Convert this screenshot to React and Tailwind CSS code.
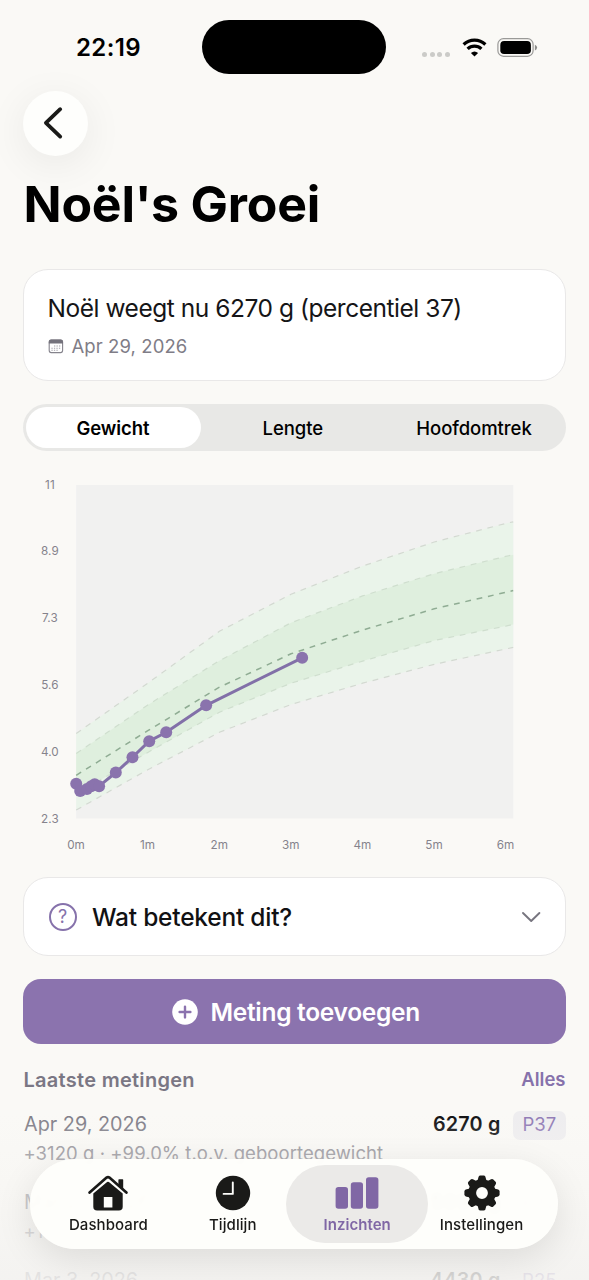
import React from 'react';

const GREEN_LINE = '#8fac93';
const PURPLE = '#8a73ad';

/* Growth standard, kg per month (0..6) plus the value at the right edge of the plot. */
const MONTHS = [0, 1, 2, 3, 4, 5, 6, 6.104];
const P3 = [2.5, 3.5, 4.43, 5.12, 5.65, 6.12, 6.5, 6.54];
const P15 = [2.9, 3.93, 4.93, 5.65, 6.2, 6.71, 7.07, 7.11];
const P50 = [3.36, 4.47, 5.55, 6.38, 6.97, 7.5, 7.91, 7.95];
const P85 = [3.9, 5.11, 6.21, 7.15, 7.82, 8.37, 8.8, 8.84];
const P97 = [4.4, 5.65, 6.94, 7.86, 8.56, 9.16, 9.62, 9.66];

const POINTS = [
  [0, 3.15], [0.056, 2.97], [0.15, 3.02], [0.21, 3.09], [0.258, 3.14], [0.32, 3.09],
  [0.553, 3.43], [0.786, 3.81], [1.02, 4.21], [1.257, 4.43], [1.815, 5.1], [3.156, 6.28],
];

const px = (m) => 53.2 + m * 71.6;
const py = (kg) => 348 - (kg - 2.3) * 40.24;
const line = (vals) => vals.map((v, i) => `${px(MONTHS[i]).toFixed(1)},${py(v).toFixed(1)}`);
const band = (a, b) => [...line(a), ...line(b).reverse()].join(' ');

const Y_LABELS = ['11', '8.9', '7.3', '5.6', '4.0', '2.3'];
const X_LABELS = ['0m', '1m', '2m', '3m', '4m', '5m', '6m'];

function GrowthChart() {
  return (
    <svg className="mt-[19px] block h-[387px] w-[542px] shrink-0" viewBox="0 0 542 387" fontFamily="Inter, sans-serif" fontSize="11.7" fill="#85838c">
      <rect x="53.2" y="15" width="437.1" height="333.5" fill="#f1f1f0" />
      <polygon points={band(P97, P3)} fill="#eaf4ea" />
      <polygon points={band(P85, P15)} fill="#dfefde" />
      {[P97, P85, P15, P3].map((p, i) => (
        <polyline key={i} points={line(p).join(' ')} fill="none" stroke={i === 1 || i === 2 ? '#cfdece' : '#d3d9d1'} strokeWidth="1.2" strokeDasharray="5.8 5.8" />
      ))}
      <polyline points={line(P50).join(' ')} fill="none" stroke={GREEN_LINE} strokeWidth="1.5" strokeDasharray="5.8 5.8" />
      <polyline points={POINTS.map(([m, v]) => `${px(m)},${py(v)}`).join(' ')} fill="none" stroke="#8270a8" strokeWidth="3" strokeLinejoin="round" />
      {POINTS.map(([m, v]) => (
        <circle key={m} cx={px(m)} cy={py(v)} r="6" fill={PURPLE} />
      ))}
      {Y_LABELS.map((t, i) => (
        <text key={t} x="26.9" y={18.6 + i * 66.8} textAnchor="middle" letterSpacing="0.1">{t}</text>
      ))}
      {X_LABELS.map((t, i) => (
        <text key={t} x={53 + i * 71.6} y="379.3" textAnchor="middle">{t}</text>
      ))}
    </svg>
  );
}

function StatusBar() {
  return (
    <div className="flex h-[74px] shrink-0 items-center pt-5">
      <div className="w-[202.4px] pt-[2px] pl-[76px] text-[24px] leading-none font-[580] tracking-[0.4px]">22:19</div>
      <div className="h-[54px] w-[184px] rounded-full bg-black" />
      <div className="ml-[35.5px] flex gap-[2.8px] pt-[14px]">
        {[0, 1, 2, 3].map((i) => (
          <span key={i} className="size-[5px] rounded-full bg-[#cbcbc8]" />
        ))}
      </div>
      <svg className="ml-[11.5px] h-[19px] w-[25px]" viewBox="0 0 25 19" fill="none" stroke="#000" strokeWidth="3.2">
        <path d="M1.6 6.5 A15.8 15.8 0 0 1 23.4 6.5" />
        <path d="M5.6 10.9 A9.8 9.8 0 0 1 19.4 10.9" />
        <path d="M12.5 18.6 L8.9 15 A5.4 5.4 0 0 1 16.1 15 Z" fill="#000" stroke="none" />
      </svg>
      <svg className="ml-[10.3px] h-[19px] w-[41px]" viewBox="0 0 41 19">
        <rect x="0.9" y="0.7" width="35.2" height="17.6" rx="5.6" fill="none" stroke="#9a9a98" strokeWidth="1.2" />
        <rect x="3.3" y="3.1" width="30.6" height="12.9" rx="3.8" fill="#000" />
        <path d="M37.9 6.8 q2.2 0.9 2.2 2.8 t-2.2 2.8 z" fill="#8c8c8a" />
      </svg>
    </div>
  );
}

function Card({ className, children }) {
  return <div className={`shrink-0 rounded-[25px] border-[1.5px] border-[#e9e8e8] bg-white ${className}`}>{children}</div>;
}

function CalendarIcon() {
  return (
    <svg className="h-[15px] w-[16px]" viewBox="0 0 16 15" fill="none">
      <rect x="1.2" y="1" width="13.4" height="12.6" rx="2" stroke="#85838c" strokeWidth="1.1" />
      <path d="M0.8 3 a2.4 2.4 0 0 1 2.4 -2.4 h9.4 a2.4 2.4 0 0 1 2.4 2.4 v1.4 h-14.2 z" fill="#74727c" />
      <path d="M6 7h6.8M3.4 9.2h9.4M3.4 11.3h6.8" stroke="#a3a1a9" strokeWidth="1.1" strokeDasharray="1.3 1.2" />
    </svg>
  );
}

const ROWS = [
  { date: 'Apr 29, 2026', value: '6270 g', p: 'P37', note: '+3120 g · +99.0% t.o.v. geboortegewicht', chip: 'bg-[#eeedef]' },
  { date: 'Mar 20, 2026', value: '5090 g', p: 'P32', note: '+1940 g · +61.6% t.o.v. geboortegewicht', chip: 'bg-transparent' },
  { date: 'Mar 3, 2026', value: '4430 g', p: 'P25', note: '+1280 g · +40.6% t.o.v. geboortegewicht', chip: 'bg-transparent' },
];

function MeasurementRow({ date, value, p, note, chip }) {
  return (
    <div className="h-[78px] shrink-0">
      <div className="flex h-[30px] items-center">
        <span className="flex-1 pl-px text-[19.8px] tracking-[0.02px] text-[#817f89]">{date}</span>
        <span className="text-[19.8px] font-semibold tracking-[0.18px] text-[#121214]">{value}</span>
        <span className={`ml-[12.5px] flex h-[29px] w-[52.5px] items-center justify-center rounded-[7px] text-[18.5px] text-[#917bb6] ${chip}`}>{p}</span>
      </div>
      <div className="pl-[0.5px] text-[18.5px] leading-[27px] tracking-[0.06px] text-[#8e8c94]">{note}</div>
    </div>
  );
}

function HouseIcon() {
  return (
    <svg className="h-[36px] w-[42px]" viewBox="0 0 42 36" fill="#1a1a18">
      <path d="M2.6 17.6 L19.6 2.6 Q21 1.5 22.4 2.6 L39.4 17.6" fill="none" stroke="#1a1a18" strokeWidth="2.7" strokeLinecap="round" strokeLinejoin="round" />
      <path d="M32 4.3 h3.6 q0.6 0 0.6 0.7 v9.4 l-4.8 -4.2 v-5.2 q0 -0.7 0.6 -0.7z" />
      <path fillRule="evenodd" d="M6.3 18.6 L20.1 7 Q21 6.3 21.9 7 L35.7 18.6 V31.8 Q35.7 35.6 31.9 35.6 H10.1 Q6.3 35.6 6.3 31.8 Z M16.8 22 V32.6 H25.4 V22 Z" />
    </svg>
  );
}

function ClockIcon() {
  return (
    <svg className="size-[36px]" viewBox="0 0 36 36">
      <circle cx="18" cy="18" r="17.2" fill="#1a1a18" />
      <path d="M17.8 7.4 V18.9 H8.6" fill="none" stroke="#fdfdfa" strokeWidth="1.9" strokeLinecap="round" strokeLinejoin="round" />
    </svg>
  );
}

function BarsIcon() {
  return (
    <svg className="h-[36px] w-[44px]" viewBox="0 0 44 36" fill="#8067a5">
      <rect x="0.6" y="12" width="12.4" height="21.8" rx="2.8" />
      <rect x="15.8" y="7.3" width="12.2" height="26.5" rx="2.8" />
      <rect x="31" y="2.3" width="12.4" height="31.5" rx="2.8" />
    </svg>
  );
}

function GearIcon() {
  return (
    <svg className="size-[36px]" viewBox="-18 -18 36 36" fill="#1a1a18">
      <circle r="9.8" fill="none" stroke="#1a1a18" strokeWidth="7.8" />
      {[0, 45, 90, 135, 180, 225, 270, 315].map((a) => (
        <path key={a} transform={`rotate(${a})`} d="M-4.6 -12 L-3.4 -16.2 Q-2.9 -17.6 -1.6 -17.6 H1.6 Q2.9 -17.6 3.4 -16.2 L4.6 -12 Z" />
      ))}
    </svg>
  );
}

const TABS = [
  { label: 'Dashboard', icon: <HouseIcon /> },
  { label: 'Tijdlijn', icon: <ClockIcon /> },
  { label: 'Inzichten', icon: <BarsIcon />, active: true },
  { label: 'Instellingen', icon: <GearIcon /> },
];

function TabBar() {
  return (
    <nav className="absolute bottom-[31px] left-[30px] flex h-[90px] w-[528px] rounded-full bg-[#fefefb]/97 pt-[5.5px] pr-[14px] pb-[6px] pl-[16.2px] shadow-[0_10px_36px_rgba(0,0,0,0.10)] backdrop-blur-[2px]">
      {TABS.map((t) => (
        <div
          key={t.label}
          className={
            t.active
              ? '-mx-[9px] flex w-[142.4px] shrink-0 flex-col items-center rounded-full bg-[#ebeae8] pt-[10.5px] text-[15px] font-semibold tracking-[0.04px] text-[#8067a5]'
              : 'flex w-[124.4px] shrink-0 flex-col items-center pt-[10.5px] text-[15px] font-medium tracking-[0.08px] text-[#1a1a18]'
          }
        >
          {t.icon}
          <span className="mt-[4px] leading-[20px]">{t.label}</span>
        </div>
      ))}
    </nav>
  );
}

export default function App() {
  return (
    <div className="relative flex h-[1280px] w-[589px] flex-col overflow-hidden bg-[#faf9f6] font-['Inter',sans-serif] text-black">
      <StatusBar />
      <div className="flex flex-col pr-[23.5px] pl-[23px]">
        <button className="mt-[16.5px] flex size-[65px] shrink-0 items-center justify-center rounded-full bg-[#fefefc] shadow-[0_8px_40px_rgba(0,0,0,0.07)]">
          <svg className="mr-[6px] h-[34px] w-[22px]" viewBox="0 0 22 34" fill="none" stroke="#1a1a18" strokeWidth="3.8" strokeLinecap="round" strokeLinejoin="round">
            <path d="M18.2 3.2 L3.9 16.9 L18.2 30.6" />
          </svg>
        </button>
        <h1 className="mt-[18.5px] h-[60px] shrink-0 pl-[0.5px] text-[50px] leading-[60px] font-bold tracking-[-0.22px]">Noël's Groei</h1>

        <Card className="mt-[35px] h-[111.5px] pt-[23px] pl-[23.5px]">
          <div className="text-[24.5px] leading-[30px] tracking-[-0.46px] text-[#151517]">Noël weegt nu 6270 g (percentiel 37)</div>
          <div className="mt-[10px] flex items-center text-[18.5px] leading-[26px] tracking-[0.09px] text-[#7f7d87]">
            <CalendarIcon />
            <span className="ml-[8px]">Apr 29, 2026</span>
          </div>
        </Card>

        <div className="mt-[23.5px] flex h-[46.5px] shrink-0 rounded-full bg-[#e8e8e6] p-[2.5px] text-center text-[18.5px] leading-[42px] font-[480]">
          <div className="w-[175.5px] rounded-full bg-white font-[580] tracking-[-0.05px]">Gewicht</div>
          <div className="w-[185px] tracking-[-0.06px]">Lengte</div>
          <div className="w-[178.5px] tracking-[-0.06px]">Hoofdomtrek</div>
        </div>

        <GrowthChart />

        <Card className="mt-[20.5px] flex h-[79px] items-center pt-px pr-[24px] pl-[24.5px]">
          <span className="flex size-[28px] items-center justify-center rounded-full border-[2px] border-[#8672ab] text-[18px] leading-none text-[#8672ab]">?</span>
          <span className="ml-[15.5px] flex-1 text-[24.5px] leading-[30px] font-[480] tracking-[-0.22px] text-[#111113]">Wat betekent dit?</span>
          <svg className="h-[12px] w-[20px]" viewBox="0 0 20 12" fill="none" stroke="#77757f" strokeWidth="1.9" strokeLinecap="round" strokeLinejoin="round">
            <path d="M2 2 L10.2 10 L18.4 2" />
          </svg>
        </Card>

        <button className="mt-[23px] flex h-[65px] shrink-0 items-center justify-center rounded-[18px] bg-[#8b73ae] pt-px pl-[3px] text-white">
          <svg className="size-[26px]" viewBox="0 0 26 26">
            <circle cx="13" cy="13" r="12.8" fill="#fff" />
            <path d="M13 7.6 V18.4 M7.6 13 H18.4" stroke="#8b73ae" strokeWidth="2.4" strokeLinecap="round" />
          </svg>
          <span className="ml-[13px] text-[24.5px] leading-[30px] font-[580] tracking-[-0.29px]">Meting toevoegen</span>
        </button>

        <div className="mt-[21px] flex h-[30px] shrink-0 items-center justify-between pl-[0.5px]">
          <h2 className="text-[20px] font-[580] tracking-[0.28px] text-[#7a7784]">Laatste metingen</h2>
          <span className="text-[18.5px] font-[580] text-[#8672ab]">Alles</span>
        </div>
        <div className="mt-[15px] flex h-[170px] shrink-0 flex-col">
          {ROWS.map((r) => (
            <MeasurementRow key={r.date} {...r} />
          ))}
        </div>
      </div>
      <div className="pointer-events-none absolute inset-x-0 bottom-0 h-[165px] bg-linear-to-b from-[#f8f7f4]/0 via-[#f6f5f2]/60 to-[#f3f2f0]/88" />
      <TabBar />
    </div>
  );
}
